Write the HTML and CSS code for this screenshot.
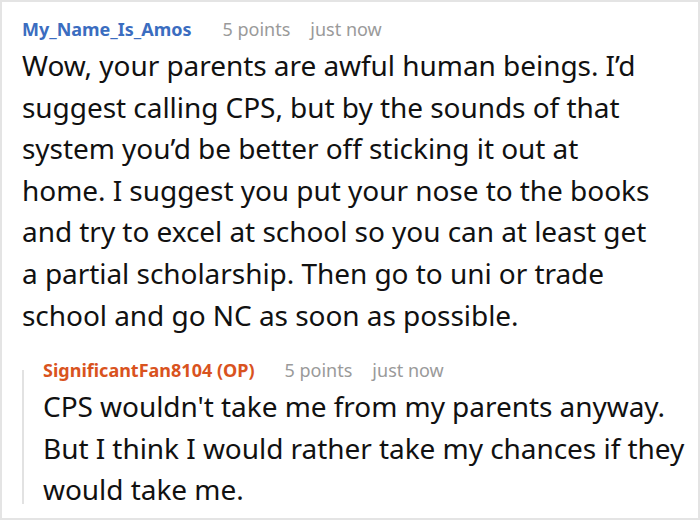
FILE: index.html
```html
<!DOCTYPE html>
<html>
<head>
<meta charset="utf-8">
<link rel="stylesheet" href="styles.css">
</head>
<body>
<div class="page">
  <div class="comment">
    <div class="meta">
      <span class="author">My_Name_Is_Amos</span>
      <span class="points">5 points</span>
      <span class="time">just now</span>
    </div>
    <p class="text">Wow, your parents are awful human beings. I’d suggest calling CPS, but by the sounds of that system you’d be better off sticking it out at home. I suggest you put your nose to the books and try to excel at school so you can at least get a partial scholarship. Then go to uni or trade school and go NC as soon as possible.</p>
  </div>
  <div class="reply">
    <div class="meta">
      <span class="author op">SignificantFan8104 (OP)</span>
      <span class="points">5 points</span>
      <span class="time">just now</span>
    </div>
    <p class="text">CPS wouldn't take me from my parents anyway. But I think I would rather take my chances if they would take me.</p>
  </div>
</div>
</body>
</html>
```
FILE: styles.css
```css
html, body {
  margin: 0;
  padding: 0;
  background: #fff;
}
.page {
  box-sizing: border-box;
  width: 700px;
  height: 520px;
  border: 2px solid #e4e4e4;
  padding: 15px 8px 0 20px;
  font-family: "Noto Sans", "Open Sans", sans-serif;
  color: #111;
  overflow: hidden;
}
.meta {
  display: flex;
  align-items: baseline;
  font-size: 18px;
  line-height: 24px;
  height: 24px;
}
.author {
  font-weight: 700;
  color: #3b6dc0;
  margin-right: 31px;
}
.author.op {
  color: #d9531e;
  margin-right: 30px;
}
.points {
  color: #9a9a9a;
  margin-right: 20px;
}
.time {
  color: #9a9a9a;
}
.text {
  margin: 4px 0 0 0;
  font-size: 28px;
  line-height: 41.6px;
  letter-spacing: -0.05px;
}
.comment .text {
  max-width: 633px;
}
.reply {
  position: relative;
  margin-top: 22px;
  padding-left: 21px;
}
.reply::before {
  content: "";
  position: absolute;
  left: 0;
  top: 12px;
  bottom: 7px;
  width: 2px;
  background: #e2e2e2;
}
.reply .text {
  margin-top: 4px;
}
```
